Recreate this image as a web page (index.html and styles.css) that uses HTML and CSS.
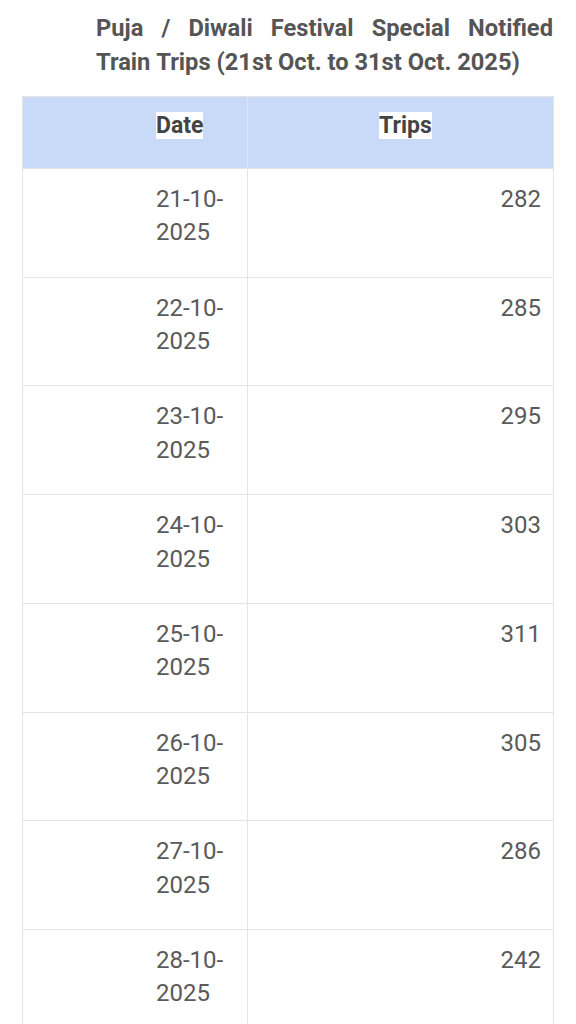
FILE: index.html
```html
<!DOCTYPE html>
<html lang="en">
<head>
<meta charset="utf-8">
<title>Puja / Diwali Festival Special Notified Train Trips</title>
<link rel="stylesheet" href="styles.css">
</head>
<body>
<h2 class="title">Puja / Diwali Festival Special Notified Train&nbsp;Trips (21st Oct. to 31st Oct. 2025)</h2>
<div class="table">
  <div class="cell head date-col"><span class="hl">Date</span></div>
  <div class="cell head trips-col"><span class="hl">Trips</span></div>

  <div class="cell date-col">21-10-2025</div>
  <div class="cell trips-col">282</div>

  <div class="cell date-col">22-10-2025</div>
  <div class="cell trips-col">285</div>

  <div class="cell date-col">23-10-2025</div>
  <div class="cell trips-col">295</div>

  <div class="cell date-col">24-10-2025</div>
  <div class="cell trips-col">303</div>

  <div class="cell date-col">25-10-2025</div>
  <div class="cell trips-col">311</div>

  <div class="cell date-col">26-10-2025</div>
  <div class="cell trips-col">305</div>

  <div class="cell date-col">27-10-2025</div>
  <div class="cell trips-col">286</div>

  <div class="cell date-col">28-10-2025</div>
  <div class="cell trips-col">242</div>
</div>
</body>
</html>
```

FILE: styles.css
```css
html, body {
  margin: 0;
  padding: 0;
  background: #ffffff;
}

body {
  font-family: Roboto, "Liberation Sans", Arial, sans-serif;
  color: #5a5a5a;
}

.title {
  margin: 11px 23px 0 96px;
  font-size: 23.7px;
  line-height: 34px;
  font-weight: 700;
  color: #555555;
  text-align: justify;
}

.table {
  display: grid;
  grid-template-columns: 225px 306px;
  width: 531px;
  margin: 17px 0 0 22px;
  border-left: 1px solid #e4e4e4;
  border-top: 1px solid #e4e4e4;
}

.cell {
  border-right: 1px solid #e4e4e4;
  border-bottom: 1px solid #e4e4e4;
  font-size: 24px;
  line-height: 33.4px;
  padding-top: 14px;
  padding-bottom: 26.9px;
}

.cell.head {
  background: #c9daf8;
  height: 72px;
  box-sizing: border-box;
  padding-top: 12px;
  padding-bottom: 0;
  font-size: 23px;
  font-weight: 700;
  color: #444444;
}

.hl {
  background: #ffffff;
}

.date-col {
  padding-left: 133px;
  padding-right: 11px;
}

.trips-col {
  text-align: right;
  padding-right: 12px;
}

.head.trips-col {
  text-align: left;
  padding-left: 131px;
}
```
